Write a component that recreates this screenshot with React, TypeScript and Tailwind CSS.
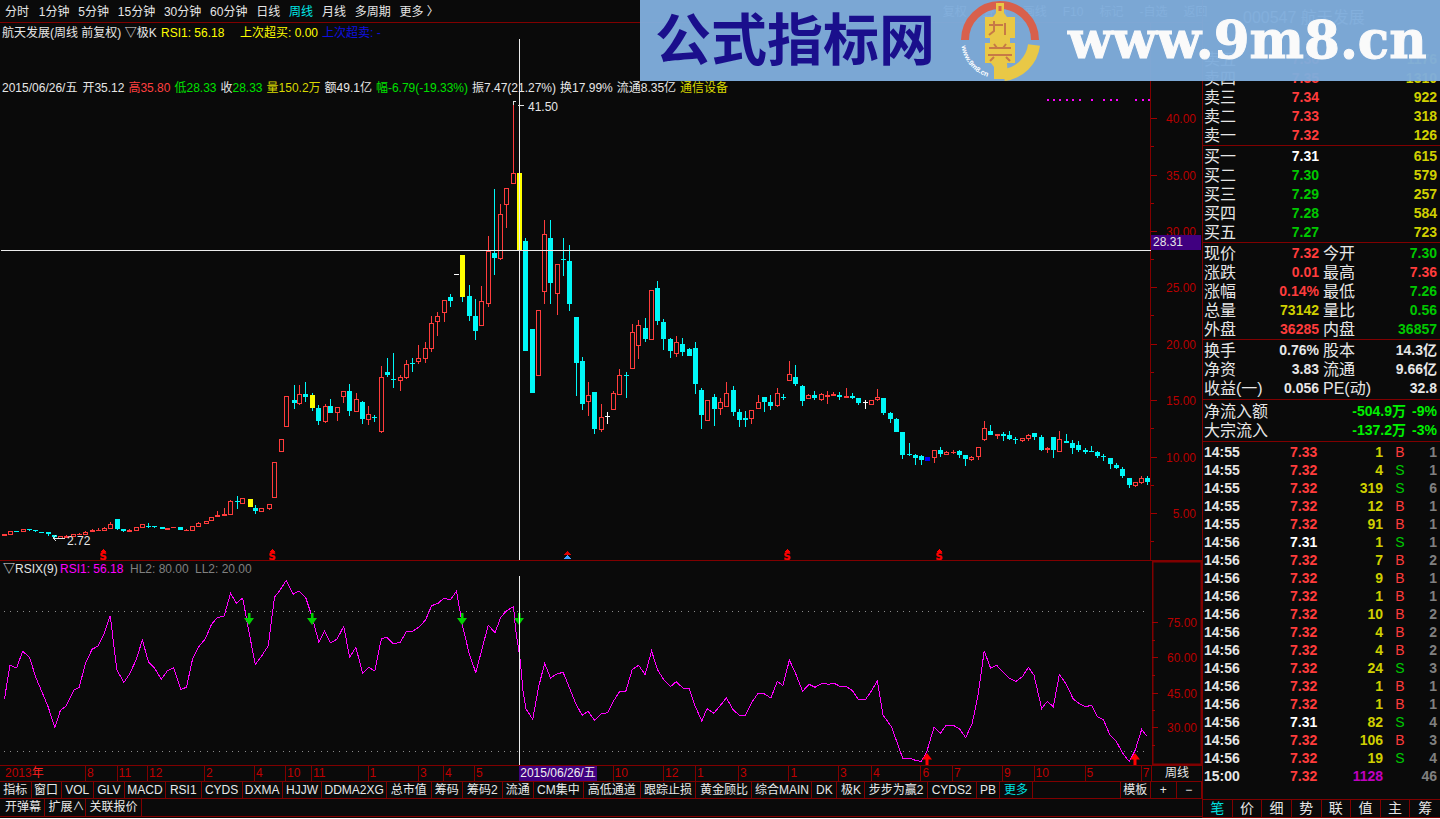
import React from "react";

const RED = "#ff3c3c";
const CYAN = "#00f8f8";
const YELLOW = "#ffff00";

type Kind = "h" | "c" | "y" | "f" | "w" | "b";
// x, body top, body bottom, high, low, kind (values as read from the crops)
type Raw = [number, number, number, number, number, Kind];

const segA: Raw[] = [
  [11, 522, 527, 522, 527, "f"], [27, 514, 524, 514, 524, "h"], [43, 514, 516, 514, 516, "c"], [59, 508, 515, 508, 515, "h"],
  [77, 508, 510, 507, 513, "c"], [92, 511, 514, 511, 516, "c"], [108, 516, 518, 516, 518, "c"], [126, 517, 522, 517, 527, "c"],
  [142, 525, 531, 525, 533, "c"], [158, 529, 537, 529, 537, "h"], [173, 528, 533, 525, 535, "h"], [192, 523, 530, 523, 530, "h"],
  [207, 522, 525, 518, 525, "f"], [223, 516, 525, 514, 525, "h"], [241, 510, 515, 507, 515, "f"], [256, 510, 512, 504, 513, "f"],
  [273, 505, 513, 501, 513, "h"], [288, 493, 506, 487, 506, "h"], [307, 477, 507, 477, 510, "c"], [322, 507, 513, 507, 516, "c"],
  [338, 511, 515, 508, 515, "f"], [356, 502, 512, 502, 512, "h"], [372, 493, 503, 493, 503, "h"], [388, 497, 497, 490, 503, "c"],
  [403, 498, 501, 498, 504, "c"], [422, 501, 507, 501, 507, "c"], [437, 504, 509, 504, 509, "f"], [452, 502, 503, 502, 503, "f"],
  [471, 501, 510, 501, 510, "c"], [486, 510, 513, 507, 513, "f"], [503, 497, 512, 497, 512, "h"], [518, 490, 500, 486, 500, "h"],
  [537, 484, 491, 484, 491, "h"], [552, 472, 484, 472, 484, "h"], [568, 466, 472, 454, 472, "h"], [586, 462, 467, 444, 469, "f"],
  [602, 424, 464, 420, 464, "h"], [618, 423, 423, 408, 446, "c"], [633, 415, 431, 415, 431, "h"], [652, 417, 441, 417, 441, "y"],
  [667, 444, 453, 435, 461, "c"], [683, 445, 455, 445, 455, "h"], [702, 433, 447, 433, 450, "h"], [717, 307, 413, 307, 413, "h"],
  [733, 238, 275, 238, 275, "h"], [748, 109, 200, 109, 200, "h"], [767, 121, 129, 75, 146, "c"], [782, 103, 131, 75, 135, "h"],
  [798, 102, 111, 66, 126, "c"], [816, 105, 144, 98, 152, "y"], [832, 144, 183, 136, 194, "c"], [848, 139, 185, 131, 190, "h"],
  [863, 138, 159, 118, 159, "c"], [881, 142, 158, 142, 183, "h"], [897, 94, 110, 94, 129, "h"], [913, 93, 153, 72, 167, "c"],
  [931, 118, 155, 98, 155, "h"], [947, 126, 177, 123, 191, "c"], [962, 163, 179, 138, 194, "h"], [977, 171, 171, 166, 185, "c"],
];

const segB: Raw[] = [
  [364, 862, 1027, 828, 1030, "h"], [382, 846, 855, 804, 861, "c"], [400, 868, 868, 790, 893, "c"], [421, 862, 872, 855, 903, "h"],
  [439, 823, 863, 811, 866, "h"], [457, 820, 820, 805, 846, "c"], [475, 805, 815, 766, 823, "h"], [496, 775, 808, 757, 818, "h"],
  [514, 700, 776, 679, 785, "h"], [532, 679, 697, 666, 738, "h"], [553, 631, 668, 631, 696, "h"], [571, 622, 632, 613, 651, "c"],
  [589, 553, 553, 553, 553, "w"], [607, 495, 621, 495, 636, "y"], [628, 618, 678, 586, 693, "c"], [646, 678, 723, 628, 750, "c"],
  [664, 634, 707, 588, 709, "h"], [685, 484, 641, 438, 651, "h"], [703, 489, 503, 297, 555, "c"], [721, 373, 506, 342, 509, "h"],
  [739, 295, 344, 295, 414, "h"], [760, 250, 281, 40, 281, "h"], [778, 249, 480, 225, 480, "y"], [796, 453, 783, 444, 783, "c"],
  [817, 717, 909, 717, 909, "c"], [835, 661, 857, 661, 857, "h"], [853, 433, 605, 390, 642, "h"], [871, 444, 579, 390, 642, "c"],
  [892, 523, 611, 523, 675, "h"], [910, 508, 508, 444, 558, "c"], [928, 513, 642, 465, 663, "c"],
];

const segC: Raw[] = [
  [199, 321, 459, 321, 558, "c"], [217, 453, 582, 441, 600, "c"], [235, 556, 575, 516, 618, "h"], [253, 546, 657, 546, 672, "c"],
  [274, 622, 659, 582, 666, "h"], [292, 618, 618, 606, 642, "w"], [310, 549, 599, 543, 599, "h"], [328, 495, 555, 477, 555, "h"],
  [349, 496, 496, 486, 564, "c"], [367, 366, 477, 342, 477, "h"], [385, 345, 407, 330, 447, "h"], [406, 354, 387, 324, 396, "c"],
  [424, 240, 389, 240, 389, "h"], [442, 234, 333, 213, 345, "c"], [460, 336, 387, 327, 420, "c"], [481, 387, 423, 384, 444, "c"],
  [499, 396, 432, 378, 441, "h"], [517, 402, 426, 384, 438, "c"], [538, 417, 438, 414, 438, "c"], [556, 414, 522, 396, 552, "c"],
  [574, 540, 615, 534, 657, "c"], [592, 570, 633, 570, 633, "h"], [613, 561, 597, 552, 648, "c"], [631, 576, 597, 564, 615, "h"],
  [649, 549, 591, 516, 591, "h"], [670, 540, 606, 528, 618, "c"], [688, 606, 630, 597, 651, "c"], [706, 624, 630, 603, 651, "c"],
  [724, 600, 627, 600, 642, "h"], [745, 576, 597, 555, 597, "h"], [763, 561, 576, 561, 606, "c"], [781, 576, 588, 555, 600, "c"],
  [802, 549, 588, 534, 591, "h"], [820, 561, 561, 552, 570, "c"], [838, 492, 513, 453, 513, "h"], [856, 501, 522, 465, 528, "c"],
  [877, 528, 573, 525, 588, "c"], [895, 555, 567, 552, 567, "h"], [913, 555, 564, 543, 570, "c"], [934, 552, 570, 549, 573, "h"],
  [952, 555, 561, 543, 582, "f"], [970, 552, 558, 546, 558, "f"], [988, 555, 561, 546, 570, "c"], [1009, 558, 564, 534, 564, "f"],
];

const segD: Raw[] = [
  [217, 138, 145, 129, 148, "c"], [235, 144, 159, 144, 165, "c"], [256, 157, 157, 150, 177, "w"], [274, 150, 164, 150, 164, "h"],
  [292, 141, 150, 117, 153, "h"], [310, 144, 189, 144, 195, "c"], [331, 189, 207, 186, 219, "c"], [349, 207, 246, 204, 246, "c"],
  [367, 246, 315, 246, 327, "c"], [388, 313, 313, 279, 318, "c"], [406, 315, 324, 312, 345, "c"], [424, 318, 330, 315, 345, "c"],
  [442, 321, 333, 321, 333, "b"], [463, 300, 324, 300, 339, "h"], [481, 300, 312, 291, 321, "c"], [499, 306, 315, 303, 315, "h"],
  [519, 306, 307, 300, 312, "f"], [538, 303, 315, 300, 324, "c"], [556, 315, 327, 315, 348, "c"], [574, 321, 330, 318, 333, "h"],
  [595, 291, 321, 291, 330, "h"], [613, 234, 270, 213, 273, "h"], [631, 243, 255, 225, 255, "c"], [652, 252, 258, 252, 267, "f"],
  [670, 252, 258, 246, 273, "c"], [688, 255, 267, 243, 270, "c"], [706, 266, 266, 261, 282, "c"], [727, 264, 273, 264, 276, "h"],
  [745, 255, 267, 252, 273, "h"], [763, 249, 261, 249, 270, "c"], [784, 261, 300, 255, 303, "c"], [802, 294, 300, 291, 309, "f"],
  [820, 261, 300, 261, 324, "c"], [838, 267, 306, 243, 306, "h"], [859, 273, 279, 252, 279, "c"], [877, 279, 294, 270, 312, "c"],
  [895, 285, 300, 273, 306, "c"], [916, 300, 306, 294, 312, "c"], [934, 304, 304, 288, 306, "c"], [952, 306, 318, 303, 324, "c"],
  [970, 318, 318, 312, 333, "c"], [991, 324, 342, 324, 357, "c"], [1009, 345, 354, 339, 357, "c"], [1027, 357, 378, 351, 384, "c"],
  [1048, 384, 405, 384, 414, "c"], [1066, 396, 408, 396, 411, "h"], [1084, 384, 399, 378, 402, "h"], [1102, 384, 396, 378, 405, "c"],
];

const mapSeg = (seg: Raw[], x0: number, sx: number, y0: number): Raw[] =>
  seg.map(([x, t, b, h, l, k]) => [Math.round(x0 + x / sx), y0 + t / 3, y0 + b / 3, y0 + h / 3, y0 + l / 3, k]);

const candles: Raw[] = [
  ...mapSeg(segA, 0, 2.613, 360),
  ...mapSeg(segB, 260, 3, 90),
  ...mapSeg(segC, 510, 3, 210),
  ...mapSeg(segD, 780, 3, 350),
];

const rsiLeft = [
  [12, 418], [27, 316], [45, 324], [61, 274], [80, 292], [96, 350], [112, 392], [130, 440], [148, 502], [163, 452], [178, 438], [200, 390], [214, 382],
  [231, 310], [249, 268], [265, 258], [280, 225], [298, 167], [316, 330], [335, 367], [350, 342], [367, 302], [385, 240], [401, 305], [418, 325],
  [436, 358], [452, 333], [469, 323], [489, 388], [504, 382], [521, 295], [537, 260], [554, 238], [572, 193], [587, 173], [606, 168], [623, 100],
  [639, 130], [656, 114], [672, 210], [690, 314], [707, 288], [725, 258], [742, 112], [757, 90], [774, 61], [792, 103], [808, 93], [826, 112],
  [842, 165], [862, 247], [877, 214], [893, 248], [911, 238], [929, 199], [945, 292], [962, 262], [980, 340], [997, 322], [1013, 333], [1031, 236],
  [1046, 232], [1063, 251], [1082, 247], [1099, 214], [1116, 213], [1134, 200], [1150, 180], [1167, 137], [1184, 130], [1200, 114], [1217, 120],
  [1234, 94], [1250, 195], [1268, 280], [1286, 338], [1304, 262], [1320, 196], [1338, 218], [1354, 171], [1370, 152], [1388, 140], [1394, 210],
  [1406, 300], [1414, 395], [1422, 447], [1440, 478], [1456, 380], [1472, 310], [1488, 354], [1505, 342], [1522, 337], [1540, 385],
];
const rsiRight = [
  [0, 388], [14, 430], [30, 466], [45, 454], [61, 481], [78, 462], [94, 458], [110, 420], [124, 394], [139, 394], [155, 328], [171, 316], [187, 344],
  [203, 273], [218, 330], [235, 362], [250, 380], [264, 365], [281, 384], [297, 386], [312, 440], [328, 483], [341, 446], [358, 460], [373, 438],
  [389, 414], [407, 451], [422, 466], [436, 466], [452, 428], [468, 400], [484, 402], [500, 414], [516, 364], [530, 377], [546, 300], [563, 345],
  [579, 394], [595, 373], [610, 382], [627, 370], [644, 373], [658, 370], [673, 380], [689, 380], [703, 392], [717, 418], [736, 418], [750, 393],
  [765, 363], [779, 465], [800, 500], [812, 540], [828, 595], [847, 595], [862, 602], [875, 604], [888, 575], [906, 502], [922, 520], [936, 496],
  [954, 496], [970, 507], [985, 533], [1001, 490], [1015, 410], [1031, 273], [1047, 325], [1062, 316], [1078, 337], [1094, 355], [1110, 364],
  [1126, 350], [1141, 322], [1155, 346], [1174, 446], [1188, 424], [1203, 440], [1218, 343], [1235, 373], [1253, 418], [1267, 430], [1283, 440],
  [1298, 436], [1313, 470], [1328, 480], [1344, 525], [1360, 545], [1376, 580], [1392, 605], [1407, 570], [1423, 508], [1435, 527],
];
const rsiPoints = [
  ...rsiLeft.map(([x, y]) => `${(x / 2.703).toFixed(1)},${(560 + y / 3).toFixed(1)}`),
  ...rsiRight.map(([x, y]) => `${(570 + x / 2.489).toFixed(1)},${(560 + y / 3).toFixed(1)}`),
].join(" ");

const Candle = ({ c }: { c: Raw }) => {
  const [x, t, b, h, l, k] = c;
  const top = Math.round(t);
  const bot = Math.round(b);
  const hi = Math.round(h);
  const lo = Math.round(l);
  const bh = Math.max(bot - top, 1);
  if (k === "w") {
    return (
      <g fill="#ffffff">
        <rect x={x - 2} y={top} width={5} height={1} />
        <rect x={x} y={hi} width={1} height={Math.max(lo - hi, 1)} />
      </g>
    );
  }
  const color = k === "c" ? CYAN : k === "y" ? YELLOW : k === "b" ? "#0000ff" : RED;
  const wick = k === "y" ? (top < 200 ? RED : CYAN) : color;
  return (
    <g>
      {hi < top && <rect x={x} y={hi} width={1} height={top - hi} fill={wick} />}
      {lo > bot && <rect x={x} y={bot} width={1} height={lo - bot} fill={wick} />}
      {k === "h" ? (
        <rect x={x - 1.5} y={top + 0.5} width={4} height={Math.max(bh - 1, 1)} fill="none" stroke={color} />
      ) : (
        <rect x={x - 2} y={top} width={5} height={bh} fill={color} />
      )}
    </g>
  );
};

const SignalS = ({ x }: { x: number }) => (
  <g fill="#ff0000">
    <polygon points={`${x - 3},552 ${x},549 ${x + 3},552`} />
    <text x={x} y={559.5} fontSize={10} fontWeight={700} textAnchor="middle" stroke="#ff0000" strokeWidth={0.3} fontFamily="'DejaVu Sans', sans-serif">
      S
    </text>
  </g>
);

const PriceChart = () => (
  <svg viewBox="0 23 1151 537" width={1151} height={537} className="absolute left-0 top-0" shapeRendering="crispEdges">
    {candles.map((c, i) => (
      <Candle key={i} c={c} />
    ))}
    {[103, 272, 787, 939].map((x) => (
      <SignalS key={x} x={x} />
    ))}
    <polygon points="563.5,555 567.5,551 571.5,555" fill="#e00000" />
    <polygon points="564,559 567.5,555 571,559" fill="#40a0ff" />
    {[1047, 1053, 1059, 1066, 1072, 1079, 1091, 1103, 1110, 1116, 1135, 1142, 1148].map((x) => (
      <rect key={x} x={x} y={99} width={2} height={2} fill="#ff00ff" />
    ))}
    <path d="M514 104h-1v-3h3M518 105h6" fill="none" stroke="#e0e0e0" />
    <path d="M56 535l-3 3 3 3M54 538h11" fill="none" stroke="#e0e0e0" />
    <rect x={1} y={250} width={1150} height={1} fill="#ececec" />
    <rect x={519} y={39} width={1} height={521} fill="#ececec" />
  </svg>
);

const AxisPrice = () => {
  const labels = [
    ["40.00", 118],
    ["35.00", 174.5],
    ["30.00", 231],
    ["25.00", 287],
    ["20.00", 344],
    ["15.00", 400],
    ["10.00", 457],
    ["5.00", 513],
  ] as const;
  return (
    <svg viewBox="1152 23 50 537" width={50} height={537} className="shrink-0">
      {labels.map(([t, y]) => (
        <g key={t}>
          <rect x={1152} y={Math.round(y)} width={6} height={1} fill="#a00000" />
          <rect x={1152} y={Math.round(y + 28)} width={3} height={1} fill="#a00000" />
          <text x={1197} y={y + 5} fontSize={12} textAnchor="end" fill="#b80000" fontFamily="'Liberation Sans', sans-serif">
            {t}
          </text>
        </g>
      ))}
    </svg>
  );
};

const RsiChart = () => (
  <svg viewBox="0 561 1151 204" width={1151} height={204} className="absolute left-0 top-0">
    {[611, 751].map((y) =>
      Array.from({ length: 181 }, (_, i) => (
        <rect key={`${y}-${i}`} x={Math.round(4 + i * 6.33)} y={y} width={1} height={1} fill="#8a8a8a" shapeRendering="crispEdges" />
      )),
    )}
    <polyline points={rsiPoints} fill="none" stroke="#ff00ff" strokeWidth={1} shapeRendering="crispEdges" />
    {[249, 312, 462, 519].map((x) => (
      <path key={x} d={`M${x - 1} 613h2.5v5h3.5l-5 7-5-7h4z`} fill="#00d000" />
    ))}
    <rect x={519} y={576} width={1} height={189} fill="#ececec" shapeRendering="crispEdges" />
    {[927, 1135].map((x) => (
      <path key={x} d={`M${x} 753l5 6.5h-3.5v5.5h-3v-5.5h-3.5z`} fill="#ff0000" />
    ))}
  </svg>
);

const AxisRsi = () => (
  <svg viewBox="1152 561 50 204" width={50} height={204} className="shrink-0">
    <rect x={1152.5} y={561.5} width={49} height={203} fill="none" stroke="#800000" strokeWidth={2} />
    {[
      ["75.00", 622],
      ["60.00", 657],
      ["45.00", 692.5],
      ["30.00", 727],
    ].map(([t, y]) => (
      <g key={t as string}>
        <rect x={1152} y={Math.round(+y)} width={6} height={1} fill="#a00000" />
        <rect x={1152} y={Math.round(+y + 17.5)} width={3} height={1} fill="#a00000" />
        <text x={1197} y={+y + 5} fontSize={12} textAnchor="end" fill="#b80000" fontFamily="'Liberation Sans', sans-serif">
          {t}
        </text>
      </g>
    ))}
  </svg>
);

const beforeCells: [number, string][] = [
  [85, "8"], [116.6, "11"], [147, "12"], [204, "2"], [254, "4"], [285, "10"], [311, "11"], [367.6, "1"], [418, "3"], [443, "4"], [474, "5"],
];
const afterCells: [number, string][] = [
  [612.6, "10"], [663, "12"], [695, "1"], [738, "3"], [788.5, "1"], [838, "3"], [871, "4"], [920.5, "6"], [952, "7"],
  [1002, "9"], [1033.6, "10"], [1084.6, "5"], [1140.7, "7"],
];

const DateRow = () => {
  const widthOf = (list: [number, string][], i: number, end: number) => (i + 1 < list.length ? list[i + 1][0] : end) - list[i][0];
  return (
    <div className="flex h-[16px] shrink-0 border-t border-[#800000] text-xs leading-[15px] text-[#c00000]">
      <div className="w-[85px] shrink-0 pl-[5px]">
        2013<span className="text-[#ff2020]">年</span>
      </div>
      {beforeCells.map(([x, l], i) => (
        <div key={x} className="shrink-0 border-l border-[#800000] pl-[1px]" style={{ width: widthOf(beforeCells, i, 519) }}>
          {l}
        </div>
      ))}
      <div className="w-[78px] shrink-0 bg-[#400080] text-center text-[#f0f0f0]">2015/06/26/五</div>
      <div className="w-[15.6px] shrink-0" />
      {afterCells.map(([x, l], i) => (
        <div key={x} className="shrink-0 border-l border-[#800000] pl-[1px]" style={{ width: widthOf(afterCells, i, 1151) }}>
          {l}
        </div>
      ))}
      <div className="flex w-[51px] shrink-0 items-center justify-center border-l border-[#800000] text-[#e8e8e8]">周线</div>
    </div>
  );
};

const tabs: [string, number][] = [
  ["指标", 31.6], ["窗口", 61.6], ["VOL", 93.7], ["GLV", 125], ["MACD", 166], ["RSI1", 201.6], ["CYDS", 242.7], ["DXMA", 282.6], ["HJJW", 322.5],
  ["DDMA2XG", 387], ["总市值", 431.6], ["筹码", 463], ["筹码2", 502.8], ["流通", 534], ["CM集中", 583.8], ["高低通道", 640.7], ["跟踪止损", 696.4],
  ["黄金顾比", 752.6], ["综合MAIN", 812.6], ["DK", 837.5], ["极K", 865.6], ["步步为赢2", 928], ["CYDS2", 976.7], ["PB", 1000.4], ["更多", 1032.8],
  ["", 1121], ["模板", 1151], ["+", 1176.7], ["−", 1202],
];

const TabRow = () => (
  <div className="flex h-[17px] shrink-0 border-t border-[#800000] text-xs leading-[16px] text-[#e8e8e8]">
    {tabs.map(([label, end], i) => (
      <div
        key={i}
        className={
          label === "更多"
            ? "shrink-0 border-r border-[#800000] text-center text-[#00e0e0]"
            : "shrink-0 border-r border-[#800000] text-center"
        }
        style={{ width: end - (i ? tabs[i - 1][1] : 0) }}
      >
        {label}
      </div>
    ))}
  </div>
);

const ExtraRow = () => (
  <div className="flex h-[18px] shrink-0 border-t border-[#800000] text-xs leading-[17px] text-[#e8e8e8]">
    <div className="w-[44.5px] border-r border-[#800000] pl-[5px]">开弹幕</div>
    <div className="w-[41px] border-r border-[#800000] pl-[4px]">扩展∧</div>
    <div className="w-[56px] border-r border-[#800000] pl-[4px]">关联报价</div>
  </div>
);

const Toolbar = () => (
  <div className="flex h-[23px] shrink-0 items-center gap-[8.8px] whitespace-nowrap border-b border-[#800000] pl-[5px] pt-[1px] text-xs text-[#e6e6e6]">
    <span className="mr-[1px]">分时</span>
    <span>1分钟</span>
    <span>5分钟</span>
    <span>15分钟</span>
    <span>30分钟</span>
    <span>60分钟</span>
    <span>日线</span>
    <span className="text-[#00e8e8]">周线</span>
    <span>月线</span>
    <span>多周期</span>
    <span>更多 〉</span>
    <div className="ml-[495px] flex gap-[16px]">
      <span>复权</span>
      <span>叠加</span>
      <span>画线</span>
      <span>F10</span>
      <span>标记</span>
      <span>-自选</span>
      <span>返回</span>
    </div>
  </div>
);

const Legend = () => (
  <div className="absolute left-[2px] top-[57px] flex gap-[4px] whitespace-nowrap text-xs leading-4 text-[#e6e6e6]">
    <span className="mr-[1px]">2015/06/26/五</span>
    <span>开35.12</span>
    <span className="text-[#ff4040]">高35.80</span>
    <span className="text-[#00e000]">低28.33</span>
    <span className="text-[#00e000]">
      <span className="text-[#e6e6e6]">收</span>28.33
    </span>
    <span className="text-[#d8d800]">量150.2万</span>
    <span>额49.1亿</span>
    <span className="text-[#00e000]">幅-6.79(-19.33%)</span>
    <span>振7.47(21.27%)</span>
    <span>换17.99%</span>
    <span>流通8.35亿</span>
    <span className="text-[#d8d800]">通信设备</span>
  </div>
);

const PricePane = () => (
  <div className="flex h-[538px] shrink-0 border-b border-[#800000]">
    <div className="relative w-[1151px] shrink-0 border-r border-[#800000]">
      <PriceChart />
      <div className="absolute left-[2px] top-[2px] flex whitespace-nowrap text-xs leading-4 text-[#e6e6e6]">
        <span className="w-[159px]">航天发展(周线 前复权) ▽极K</span>
        <span className="w-[79px] text-[#ffff00]">RSI1: 56.18</span>
        <span className="w-[82px] text-[#ffff00]">上次超买: 0.00</span>
        <span className="text-[#1010e0]">上次超卖: -</span>
      </div>
      <Legend />
      <span className="absolute left-[528px] top-[76px] text-xs leading-4 text-[#e6e6e6]">41.50</span>
      <span className="absolute left-[67px] top-[510px] text-xs leading-4 text-[#e6e6e6]">2.72</span>
    </div>
    <div className="relative">
      <AxisPrice />
      <div className="absolute left-0 top-[212px] h-[15px] w-[50px] bg-[#400080] pl-[2px] text-xs leading-[15px] text-[#e6e6e6]">28.31</div>
    </div>
  </div>
);

const RsiPane = () => (
  <div className="flex h-[204px] shrink-0">
    <div className="relative w-[1152px] shrink-0">
      <RsiChart />
      <div className="absolute left-[3px] top-0 flex whitespace-nowrap text-xs leading-4">
        <span className="w-[57px] text-[#e6e6e6]">▽RSIX(9)</span>
        <span className="w-[70px] text-[#ff00ff]">RSI1: 56.18</span>
        <span className="w-[65px] text-[#808080]">HL2: 80.00</span>
        <span className="text-[#808080]">LL2: 20.00</span>
      </div>
    </div>
    <AxisRsi />
  </div>
);

const Q = ({ label, value, color = "text-[#e6e6e6]" }: { label: string; value: string; color?: string }) => (
  <div className="flex w-[115px] items-center justify-between">
    <span className="text-base font-normal text-[#e6e6e6]">{label}</span>
    <span className={color}>{value}</span>
  </div>
);

const rowCls = "flex h-[19px] items-center justify-between whitespace-nowrap pl-[1px] pr-[3px] text-sm font-bold leading-[19px]";

const rd = "text-[#ff3c3c]";
const gn = "text-[#00c800]";
const yl = "text-[#d0d000]";
const wh = "text-[#e6e6e6]";

const BookRow = ({ label, price, vol, color }: { label: string; price: string; vol: string; color: string }) => (
  <div className={rowCls}>
    <Q label={label} value={price} color={color} />
    <span className={yl}>{vol}</span>
  </div>
);

const QuoteRow = ({ a, av, ac, b, bv, bc }: { a: string; av: string; ac: string; b: string; bv: string; bc: string }) => (
  <div className={rowCls}>
    <Q label={a} value={av} color={ac} />
    <div className="flex w-[114px] items-center justify-between">
      <span className="text-base font-normal text-[#e6e6e6]">{b}</span>
      <span className={bc}>{bv}</span>
    </div>
  </div>
);

const ticks: [string, string, string, string, string][] = [
  ["14:55", "7.33", "1", "B", "1"], ["14:55", "7.32", "4", "S", "1"], ["14:55", "7.32", "319", "S", "6"], ["14:55", "7.32", "12", "B", "1"],
  ["14:55", "7.32", "91", "B", "1"], ["14:56", "7.31", "1", "S", "1"], ["14:56", "7.32", "7", "B", "2"], ["14:56", "7.32", "9", "B", "1"],
  ["14:56", "7.32", "1", "B", "1"], ["14:56", "7.32", "10", "B", "2"], ["14:56", "7.32", "4", "B", "2"], ["14:56", "7.32", "4", "B", "2"],
  ["14:56", "7.32", "24", "S", "3"], ["14:56", "7.32", "1", "B", "1"], ["14:56", "7.32", "1", "B", "1"], ["14:56", "7.31", "82", "S", "4"],
  ["14:56", "7.32", "106", "B", "3"], ["14:56", "7.32", "19", "S", "4"], ["15:00", "7.32", "1128", "", "46"],
];

const TickRow = ({ t }: { t: [string, string, string, string, string] }) => (
  <div className="flex h-[18px] items-center whitespace-nowrap text-sm font-bold leading-[18px]">
    <span className="w-[87px] pl-[1px] text-[#e6e6e6]">{t[0]}</span>
    <span className={t[1] === "7.31" ? "w-[28px] text-[#ffffff]" : "w-[28px] text-[#ff3c3c]"}>{t[1]}</span>
    <span className={t[2] === "1128" ? "w-[65px] text-right text-[#c000c0]" : "w-[65px] text-right text-[#d0d000]"}>{t[2]}</span>
    <span className={t[3] === "B" ? "w-[34px] text-center font-normal text-[#ff3c3c]" : "w-[34px] text-center font-normal text-[#00c800]"}>{t[3]}</span>
    <span className="w-[20px] text-right text-[#808080]">{t[4]}</span>
  </div>
);

const SideTabs = () => (
  <div className="grid h-[19px] shrink-0 grid-cols-8 border-y border-[#800000] text-sm leading-[17px] text-[#e6e6e6]">
    {["笔", "价", "细", "势", "联", "值", "主", "筹"].map((l, i) => (
      <div key={l} className={i === 0 ? "border-r border-[#800000] text-center text-[#00e0e0]" : "border-r border-[#800000] text-center last:border-r-0"}>
        {l}
      </div>
    ))}
  </div>
);

const SidePanel = () => (
  <aside className="flex h-[818px] w-[238px] shrink-0 flex-col border-l border-[#800000]">
    <div className="h-[50px] shrink-0 pl-[40px] pt-[6px] text-base text-[#e6e6e6]">000547 航天发展</div>
    <div className="h-[96px] shrink-0 border-b border-[#800000]">
      <BookRow label="卖五" price="7.36" vol="1176" color={rd} />
      <BookRow label="卖四" price="7.35" vol="1310" color={rd} />
      <BookRow label="卖三" price="7.34" vol="922" color={rd} />
      <BookRow label="卖二" price="7.33" vol="318" color={rd} />
      <BookRow label="卖一" price="7.32" vol="126" color={rd} />
    </div>
    <div className="h-[97px] shrink-0 border-b border-[#800000] pt-[1px]">
      <BookRow label="买一" price="7.31" vol="615" color="text-[#ffffff]" />
      <BookRow label="买二" price="7.30" vol="579" color={gn} />
      <BookRow label="买三" price="7.29" vol="257" color={gn} />
      <BookRow label="买四" price="7.28" vol="584" color={gn} />
      <BookRow label="买五" price="7.27" vol="723" color={gn} />
    </div>
    <div className="h-[97px] shrink-0 border-b border-[#800000] pt-[1px]">
      <QuoteRow a="现价" av="7.32" ac={rd} b="今开" bv="7.30" bc={gn} />
      <QuoteRow a="涨跌" av="0.01" ac={rd} b="最高" bv="7.36" bc={rd} />
      <QuoteRow a="涨幅" av="0.14%" ac={rd} b="最低" bv="7.26" bc={gn} />
      <QuoteRow a="总量" av="73142" ac={yl} b="量比" bv="0.56" bc={gn} />
      <QuoteRow a="外盘" av="36285" ac={rd} b="内盘" bv="36857" bc={gn} />
    </div>
    <div className="h-[60px] shrink-0 border-b border-[#800000] pt-[1px]">
      <QuoteRow a="换手" av="0.76%" ac={wh} b="股本" bv="14.3亿" bc={wh} />
      <QuoteRow a="净资" av="3.83" ac={wh} b="流通" bv="9.66亿" bc={wh} />
      <QuoteRow a="收益(一)" av="0.056" ac={wh} b="PE(动)" bv="32.8" bc={wh} />
    </div>
    <div className="h-[42px] shrink-0 border-b border-[#800000] pt-[2px]">
      {[
        ["净流入额", "-504.9万", "-9%"],
        ["大宗流入", "-137.2万", "-3%"],
      ].map(([a, b, c]) => (
        <div key={a} className={rowCls}>
          <span className="text-base font-normal text-[#e6e6e6]">{a}</span>
          <span className="ml-auto text-[#00f000]">{b}</span>
          <span className="w-[31px] text-right text-[#00f000]">{c}</span>
        </div>
      ))}
    </div>
    <div className="flex-1 overflow-hidden pt-[1px]">
      {ticks.map((t, i) => (
        <TickRow key={i} t={t} />
      ))}
    </div>
    <SideTabs />
  </aside>
);

const Logo = () => (
  <svg viewBox="0 0 80 80" width={80} height={80} className="shrink-0">
    <path d="M5 39A35 35 0 0 1 75 39" fill="none" stroke="#d8604c" strokeWidth={8} />
    <path d="M74 44A34.5 34.5 0 0 1 44 74" fill="none" stroke="#e9c846" strokeWidth={12} />
    <path d="M36 2h8v10l3 4h8v21h-5v5h5v20h-8l1 16h-14v-12l-3-4h-6v-20h5v-5h-5v-21h8l3-4z" fill="#e9c846" />
    <rect x={38.5} y={5} width={3} height={5} fill="#d8604c" />
    <path d="M29 24h14M34 20v10l-5 4M45 22v12M29 47h22M34 43l3 4M46 43l-3 4M28 54h24M34 56l-4 4M46 56l4 4" fill="none" stroke="#c77a46" strokeWidth={2} />
    <defs>
      <path id="logo-arc" d="M1.5 45A38 38 0 0 0 32 77" />
    </defs>
    <text fontSize={7} fontWeight={700} fill="#ffffff" fontFamily="'Liberation Sans', sans-serif">
      <textPath href="#logo-arc">www.9m8.cn</textPath>
    </text>
  </svg>
);

const Banner = () => (
  <div className="absolute left-[640px] top-0 flex h-[81px] w-[800px] items-center bg-[#7facdb]/[0.97]">
    <span className="ml-[15px] w-[305px] whitespace-nowrap text-[56px] font-bold leading-none text-[#1a0f8c]">公式指标网</span>
    <Logo />
    <span className="ml-[28px] whitespace-nowrap text-[51.5px] font-bold leading-none text-[#fafafa] [-webkit-text-stroke:1px_#fafafa] [font-family:'DejaVu_Serif',serif]">www.9m8.cn</span>
  </div>
);

export default function App() {
  return (
    <div className="relative h-[818px] w-[1440px] overflow-hidden bg-[#0a0a0a] font-[family-name:'Liberation_Sans','Noto_Sans_CJK_SC',sans-serif]">
      <div className="flex h-[818px]">
        <main className="flex w-[1202px] shrink-0 flex-col">
          <Toolbar />
          <PricePane />
          <RsiPane />
          <DateRow />
          <TabRow />
          <ExtraRow />
          <div className="h-[2px] shrink-0 border-t border-[#800000]" />
        </main>
        <SidePanel />
      </div>
      <Banner />
    </div>
  );
}
